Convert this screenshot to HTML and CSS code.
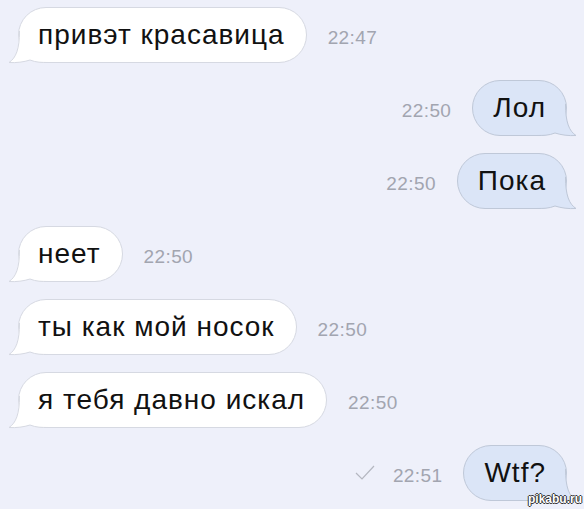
FILE: index.html
```html
<!DOCTYPE html>
<html lang="ru">
<head>
  <meta charset="UTF-8">
  <title>Переписка</title>
  <link rel="stylesheet" href="styles.css">
</head>
<body>

  <div class="chat">

    <div class="row in">
      <div class="bubble">привэт красавица
        <svg class="tail" width="34" height="34" viewBox="0 0 34 34"><path class="fill" d="M11 2 C11 20 8 29 1 33.5 C8 34 16 33 22 31 C28 33.5 34 33.5 40 33.5 L39 32.5 A26.5 26.5 0 0 1 12.5 6 Z"/><path class="line" d="M11.5 2 C11.5 20 8 29 1 33.5 C8 34 16 33 22 31 C28 33.5 34 33.5 40 33.5"/></svg>
      </div>
      <span class="time">22:47</span>
    </div>

    <div class="row out">
      <span class="time">22:50</span>
      <div class="bubble">Лол
        <svg class="tail" width="34" height="34" viewBox="0 0 34 34"><path class="fill" d="M11 2 C11 20 8 29 1 33.5 C8 34 16 33 22 31 C28 33.5 34 33.5 40 33.5 L39 32.5 A26.5 26.5 0 0 1 12.5 6 Z"/><path class="line" d="M11.5 2 C11.5 20 8 29 1 33.5 C8 34 16 33 22 31 C28 33.5 34 33.5 40 33.5"/></svg>
      </div>
    </div>

    <div class="row out">
      <span class="time">22:50</span>
      <div class="bubble">Пока
        <svg class="tail" width="34" height="34" viewBox="0 0 34 34"><path class="fill" d="M11 2 C11 20 8 29 1 33.5 C8 34 16 33 22 31 C28 33.5 34 33.5 40 33.5 L39 32.5 A26.5 26.5 0 0 1 12.5 6 Z"/><path class="line" d="M11.5 2 C11.5 20 8 29 1 33.5 C8 34 16 33 22 31 C28 33.5 34 33.5 40 33.5"/></svg>
      </div>
    </div>

    <div class="row in">
      <div class="bubble">неет
        <svg class="tail" width="34" height="34" viewBox="0 0 34 34"><path class="fill" d="M11 2 C11 20 8 29 1 33.5 C8 34 16 33 22 31 C28 33.5 34 33.5 40 33.5 L39 32.5 A26.5 26.5 0 0 1 12.5 6 Z"/><path class="line" d="M11.5 2 C11.5 20 8 29 1 33.5 C8 34 16 33 22 31 C28 33.5 34 33.5 40 33.5"/></svg>
      </div>
      <span class="time">22:50</span>
    </div>

    <div class="row in">
      <div class="bubble">ты как мой носок
        <svg class="tail" width="34" height="34" viewBox="0 0 34 34"><path class="fill" d="M11 2 C11 20 8 29 1 33.5 C8 34 16 33 22 31 C28 33.5 34 33.5 40 33.5 L39 32.5 A26.5 26.5 0 0 1 12.5 6 Z"/><path class="line" d="M11.5 2 C11.5 20 8 29 1 33.5 C8 34 16 33 22 31 C28 33.5 34 33.5 40 33.5"/></svg>
      </div>
      <span class="time">22:50</span>
    </div>

    <div class="row in">
      <div class="bubble">я тебя давно искал
        <svg class="tail" width="34" height="34" viewBox="0 0 34 34"><path class="fill" d="M11 2 C11 20 8 29 1 33.5 C8 34 16 33 22 31 C28 33.5 34 33.5 40 33.5 L39 32.5 A26.5 26.5 0 0 1 12.5 6 Z"/><path class="line" d="M11.5 2 C11.5 20 8 29 1 33.5 C8 34 16 33 22 31 C28 33.5 34 33.5 40 33.5"/></svg>
      </div>
      <span class="time">22:50</span>
    </div>

    <div class="row out">
      <svg class="check" width="20" height="16" viewBox="0 0 20 16"><polyline points="1,8 7,14 19,1"/></svg>
      <span class="time">22:51</span>
      <div class="bubble">Wtf?
        <svg class="tail" width="34" height="34" viewBox="0 0 34 34"><path class="fill" d="M11 2 C11 20 8 29 1 33.5 C8 34 16 33 22 31 C28 33.5 34 33.5 40 33.5 L39 32.5 A26.5 26.5 0 0 1 12.5 6 Z"/><path class="line" d="M11.5 2 C11.5 20 8 29 1 33.5 C8 34 16 33 22 31 C28 33.5 34 33.5 40 33.5"/></svg>
      </div>
    </div>

  </div>

  <div class="mark">pikabu.ru</div>

</body>
</html>
```

FILE: styles.css
```css
body {
  margin: 0;
  background-color: #eef0fa;
  font-family: "Liberation Sans", Arial, sans-serif;
  color: #111;
  height: 509px;
  overflow: hidden;
}

.chat {
  display: flex;
  flex-direction: column;
  gap: 17px;
  padding: 7px 17px 0 18px;
}

.row {
  display: flex;
  align-items: baseline;
  gap: 21px;
}

.row.out {
  justify-content: flex-end;
}

.bubble {
  position: relative;
  height: 54px;
  line-height: 54px;
  padding: 0 21px 0 19px;
  font-size: 28px;
  letter-spacing: 1px;
  border-radius: 28px;
  background: #fff;
  border: 1px solid #d6d9e2;
  white-space: nowrap;
}

.out .bubble {
  padding: 0 20px;
  background: #dbe5f7;
  border-color: #bfc8d8;
}

.tail {
  position: absolute;
  left: -11px;
  bottom: -1px;
  overflow: visible;
}

.out .tail {
  left: auto;
  right: -11px;
  transform: scaleX(-1);
}

.tail .fill {
  fill: #fff;
}

.tail .line {
  fill: none;
  stroke: #d6d9e2;
  stroke-width: 1;
}

.out .tail .fill {
  fill: #dbe5f7;
}

.out .tail .line {
  stroke: #bfc8d8;
}

.time {
  font-size: 19px;
  letter-spacing: 0.4px;
  color: #a2a5b0;
}

.check {
  align-self: center;
  margin-right: -3px;
}

.check polyline {
  fill: none;
  stroke: #b4b7c0;
  stroke-width: 1.2;
}

.mark {
  position: absolute;
  right: 2px;
  bottom: 3px;
  font-size: 12px;
  font-weight: bold;
  color: #fff;
  text-shadow: -1px 0 #333, 1px 0 #333, 0 -1px #333, 0 1px #333;
}
```
